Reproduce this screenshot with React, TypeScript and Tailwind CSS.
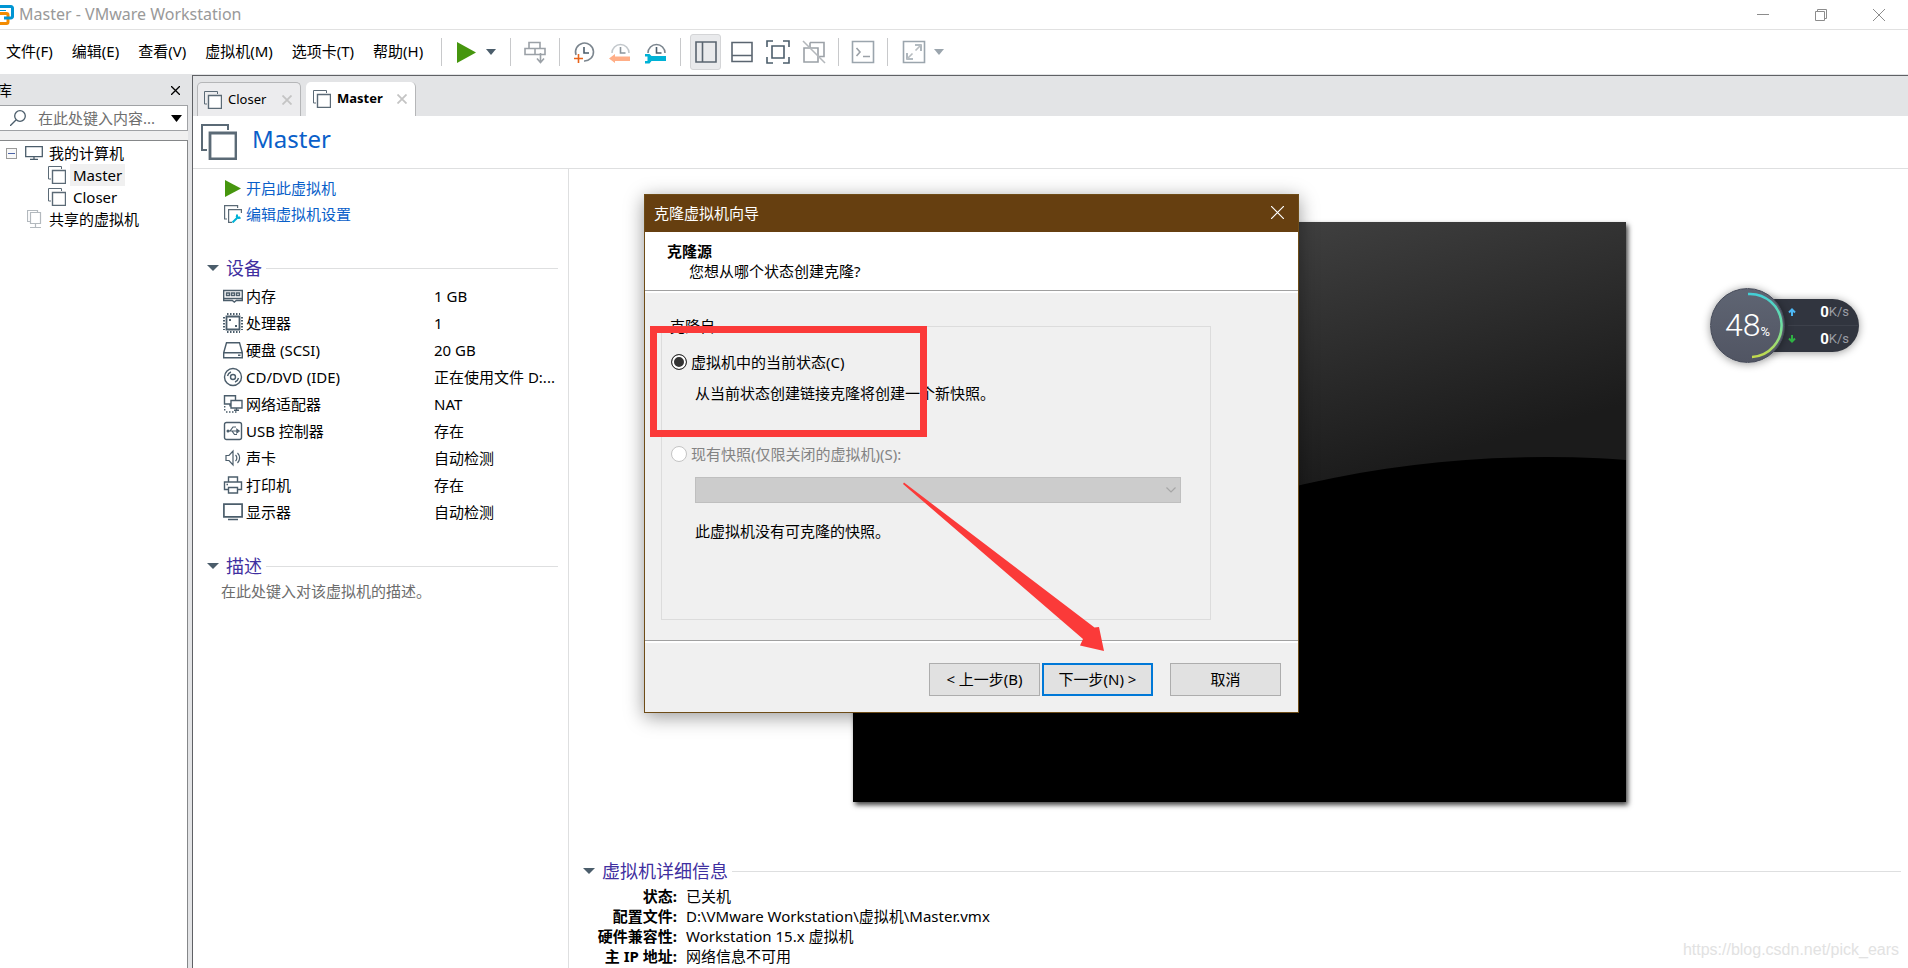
import type { ReactNode } from "react";

const SLATE = "#4b5d6b";

type IconProps = { className?: string };

const VmIcon = ({ className = "w-[18px] h-[18px]" }: IconProps) => (
  <svg viewBox="0 0 18 18" className={className} fill="none" stroke="#5b6a76">
    <path d="M3 13H.5V.5h13V3" />
    <rect x="4.5" y="4.5" width="13" height="13" fill="#fff" />
    <path d="M4.5 4.5h13v13h-13z" strokeWidth="1.4" />
  </svg>
);

const PlayIcon = ({ className }: IconProps) => (
  <svg viewBox="0 0 16 17" preserveAspectRatio="none" className={className}>
    <path d="M0 0L16 8.500L0 17z" fill="#46960e" />
  </svg>
);

const Caret = ({ className = "w-[10px] h-[6px]", color = SLATE }: IconProps & { color?: string }) => (
  <svg viewBox="0 0 12 6" preserveAspectRatio="none" className={className}>
    <path d="M0 0h12L6 6z" fill={color} />
  </svg>
);

const Logo = () => (
  <svg viewBox="0 0 14 20" className="w-[14px] h-5" fill="none" strokeWidth="3">
    <path d="M-3 8.500H6.500a1.500 1.500 0 0 1 1.500 1.500V17a1.500 1.500 0 0 1-1.500 1.500H-3" stroke="#f38b00" />
    <path d="M-3 1.500h14a1.500 1.500 0 0 1 1.500 1.500v8.500a1.500 1.500 0 0 1-1.500 1.500H4" stroke="#0095d3" />
    <path d="M0 5.500h6" stroke="#0095d3" strokeWidth="1" />
  </svg>
);

const Tool = ({ label, children }: { label: string; children: ReactNode }) => (
  <button aria-label={label} className="shrink-0">
    <svg viewBox="0 0 24 24" className="w-6 h-6" fill="none" strokeWidth="1.6">
      {children}
    </svg>
  </button>
);

const Separator = () => <span className="w-px h-7 bg-[#c8c9cb] shrink-0" />;

const menus = ["文件(F)", "编辑(E)", "查看(V)", "虚拟机(M)", "选项卡(T)", "帮助(H)"];

const TitleBar = () => (
  <header className="flex items-center h-[30px] border-b border-[#e1e1e1] shrink-0">
    <Logo />
    <h1 className="ml-[5px] pb-0.5 text-base leading-5 text-[#999] flex-1">Master - VMware Workstation</h1>
    <button aria-label="最小化" className="w-[58px] flex justify-center">
      <svg viewBox="0 0 12 12" className="w-3 h-3" stroke="#8c8c8c">
        <path d="M0 5.500h12" />
      </svg>
    </button>
    <button aria-label="还原" className="w-[58px] flex justify-center">
      <svg viewBox="0 0 12 12" className="w-3 h-3" stroke="#8c8c8c" fill="none">
        <path d="M.5 2.500h9v9h-9zM2.500 2.500v-2h9v9h-2" />
      </svg>
    </button>
    <button aria-label="关闭" className="w-[58px] flex justify-center">
      <svg viewBox="0 0 12 12" className="w-3 h-3" stroke="#8c8c8c">
        <path d="M0 0l12 12M12 0L0 12" />
      </svg>
    </button>
  </header>
);

const Toolbar = () => (
  <div className="flex items-center h-[45px] border-b border-[#e3e4e6] shrink-0">
    <nav className="flex gap-[19px] pl-1.5 pb-[3px] w-[441px] shrink-0 text-[15px] leading-5 text-black">
      {menus.map((menu) => (
        <button key={menu} className="whitespace-nowrap">
          {menu}
        </button>
      ))}
    </nav>
    <div className="flex items-center gap-3">
      <Separator />
      <button aria-label="启动" className="flex items-center gap-[10px] ml-[3px] mr-0.5">
        <PlayIcon className="w-[19px] h-[21px]" />
        <Caret />
      </button>
      <Separator />
      <Tool label="发送 Ctrl+Alt+Del">
        <g stroke="#9ba1a7">
          <path d="M6 8V2.500h11V8M2 8.500h20v6H2zM12 8.500v6" />
          <path d="M17.500 13v9M14 18.500l3.500 4 3.500-4" />
        </g>
      </Tool>
      <Separator />
      <Tool label="拍摄快照">
        <path d="M4 15A9 9 0 1 1 12 21" stroke="#7b858e" />
        <path d="M12 7v6h5" stroke={SLATE} />
        <path d="M2 18.500h9M6.500 14v9" stroke="#e8641b" />
      </Tool>
      <Tool label="恢复快照">
        <path d="M4 13A8.500 8.500 0 1 1 21 13" stroke="#c3c8cc" />
        <path d="M12.500 7v6h5" stroke="#8c959c" />
        <path d="M1 18.500l6-4.500v2.500h15v4.500H7V23z" fill="#ffae87" />
      </Tool>
      <Tool label="管理快照">
        <path d="M4 13A8.500 8.500 0 1 1 21 13" stroke="#7b858e" />
        <path d="M12.500 7v6h5" stroke={SLATE} />
        <path d="M1 14h4.500l2 2H22v5H7.500l-2 2.500H1V21h2.500v-4.500H1z" fill="#00b2d6" />
      </Tool>
      <Separator />
      <button
        aria-label="显示库"
        className="w-[31px] h-9 -mx-[3px] flex items-center justify-center rounded-[3px] border border-[#d4d5d7] bg-[#e9eaec]"
      >
        <svg viewBox="0 0 24 24" className="w-6 h-6 shrink-0" fill="none" stroke="#5a6570" strokeWidth="1.6">
          <path d="M2 2h20v20H2zM8.500 2v20" />
        </svg>
      </button>
      <Tool label="显示缩略图栏">
        <path d="M2 2.500h20v19H2zM2 15.500h20" stroke="#5a6570" />
      </Tool>
      <Tool label="全屏">
        <path d="M1 7V1h6M17 1h6v6M23 17v6h-6M7 23H1v-6M6 6h12v12H6z" stroke={SLATE} />
      </Tool>
      <Tool label="Unity 模式">
        <path d="M8 2.500h14v14h-5M8 2.500V8M2 8h14v14H2zM11 8h5v6" stroke="#9ba1a7" />
        <path d="M1 1l22 22" stroke="#b4b8bc" />
      </Tool>
      <Separator />
      <Tool label="控制台">
        <path d="M1.500 1.500h21v21h-21z" stroke="#9ba5ad" />
        <path d="M5.500 8l3.500 4-3.500 4M12 16.500h7" stroke="#9ba1a7" />
      </Tool>
      <Separator />
      <button aria-label="拉伸" className="flex items-center gap-2 ml-0.5">
        <svg viewBox="0 0 24 24" className="w-6 h-6" fill="none" stroke="#9ba5ad" strokeWidth="1.6">
          <path d="M1.500 1.500h21v21h-21zM13 5h6v6M11 19H5v-6" />
          <path d="M19 5l-5.500 5.500M5 19l5.500-5.500" stroke="#b8bdc1" />
        </svg>
        <Caret color="#9ba5ad" />
      </button>
    </div>
  </div>
);

const Library = () => (
  <aside className="w-[192px] shrink-0 bg-[#e3e4e6] flex flex-col pr-1">
    <div className="flex items-center justify-between h-[30px] text-[15px] leading-5">
      <h2 className="-ml-[3px]">库</h2>
      <button aria-label="关闭库" className="mr-2">
        <svg viewBox="0 0 9 9" className="w-[9px] h-[9px]" stroke="#000" strokeWidth="1.3">
          <path d="M0 0l9 9M9 0L0 9" />
        </svg>
      </button>
    </div>
    <label className="flex items-center h-[26px] bg-white border border-l-0 border-[#a0a2a5] pl-[10px] pr-[5px] gap-3">
      <svg viewBox="0 0 16 16" className="w-4 h-4 shrink-0" fill="none" stroke={SLATE} strokeWidth="1.3">
        <circle cx="10" cy="6" r="5.300" />
        <path d="M6 10l-6 6" />
      </svg>
      <input
        aria-label="搜索"
        placeholder="在此处键入内容..."
        className="min-w-0 flex-1 text-[15px] leading-5 outline-none placeholder:text-[#6e6e6e]"
      />
      <Caret color="#000" className="w-[11px] h-[7px] shrink-0" />
    </label>
    <div className="h-[9px] bg-[#f0f0f0]" />
    <ul className="flex-1 bg-white border-t border-r border-[#858789] pt-px text-[15px] leading-[22px] text-black">
      <li>
        <div className="flex items-center pl-1.5 h-[22px]">
          <button aria-label="折叠" className="mr-2">
            <svg viewBox="0 0 11 11" className="w-[11px] h-[11px]">
              <rect x=".5" y=".5" width="10" height="10" fill="#f8f8f8" stroke="#9a9a9a" />
              <path d="M2 5.500h7" stroke="#4b63a7" />
            </svg>
          </button>
          <svg viewBox="0 0 18 14" className="w-[18px] h-[14px] mr-1.5" fill="none" stroke={SLATE} strokeWidth="1.3">
            <path d="M.7.700h16.600v10H.700zM9 11v2M5 13.400h8" />
          </svg>
          我的计算机
        </div>
        <ul>
          <li className="flex items-center pl-12 h-[22px] gap-1">
            <VmIcon />
            <span className="bg-[#f0f0f0] px-[3px]">Master</span>
          </li>
          <li className="flex items-center pl-12 h-[22px] gap-1">
            <VmIcon />
            <span className="px-[3px]">Closer</span>
          </li>
        </ul>
      </li>
      <li className="flex items-center pl-[27px] h-[22px] gap-[7px]">
        <svg viewBox="0 0 15 18" className="w-[15px] h-[18px]" fill="none" stroke="#b3b9be">
          <path d="M3 11.500H.5V.5h10V3M3.500 2.500h10v11h-10zM8.500 13.500v4M3 17.500h11" strokeWidth="1.2" />
        </svg>
        共享的虚拟机
      </li>
    </ul>
  </aside>
);

const CloseMark = () => (
  <svg viewBox="0 0 10 10" className="w-[10px] h-[10px]" stroke="#c4c4c4" strokeWidth="1.8">
    <path d="M.5.5l9 9M9.500.5l-9 9" />
  </svg>
);

const TabStrip = () => (
  <div role="tablist" className="flex items-end gap-[5px] h-10 pl-1 bg-[#e3e4e6] shrink-0 text-[13px] leading-5 text-black">
    <div className="flex items-center h-[34px] w-[104px] pl-1.5 pr-2 bg-[#ececee] border border-b-0 border-[#b5b6b8] rounded-t-[5px]">
      <VmIcon />
      <button role="tab" aria-selected="false" className="ml-[6px] pb-0.5 flex-1 text-left">
        Closer
      </button>
      <button aria-label="关闭 Closer">
        <CloseMark />
      </button>
    </div>
    <div className="flex items-center h-[34px] w-[110px] pl-[7px] pr-2 bg-white border-r border-[#b5b6b8] rounded-t-[5px]">
      <VmIcon />
      <button role="tab" aria-selected="true" className="ml-[6px] pb-0.5 flex-1 text-left font-bold">
        Master
      </button>
      <button aria-label="关闭 Master">
        <CloseMark />
      </button>
    </div>
  </div>
);

const SectionTitle = ({ children }: { children: string }) => (
  <div className="flex items-center h-6">
    <button className="flex items-center gap-[7px] text-[18px] leading-6 text-[#3f2fa0]">
      <Caret className="w-3 h-[6px]" />
      {children}
    </button>
    <span className="flex-1 h-px bg-[#dedfe0] ml-1" />
  </div>
);

const devices: { name: string; value: string; icon: ReactNode }[] = [
  {
    name: "内存",
    value: "1 GB",
    icon: (
      <>
        <path d="M.7 4.500h18.600v10h-6l-2 1.500-2-1.500H.700zM.7 12.500h18.600" />
        <path d="M3.500 7h3v2.500h-3zM8.500 7h3v2.500h-3zM13.500 7h3v2.500h-3z" />
      </>
    ),
  },
  {
    name: "处理器",
    value: "1",
    icon: (
      <>
        <path d="M3.500 3.500h13v13h-13z" strokeWidth="1.800" />
        <path d="M4 1h13M4 19h13" strokeDasharray="1.500 1.500" strokeWidth="2" />
        <path d="M1 4v13M19 4v13" strokeDasharray="1.500 1.500" strokeWidth="2" />
        <path d="M6 7h2M12 13h2" strokeWidth="2" />
      </>
    ),
  },
  {
    name: "硬盘 (SCSI)",
    value: "20 GB",
    icon: <path d="M3.500 2.700h13l2.800 10v5H.7v-5zM.7 12.700h18.600M15 15.200h2.500" />,
  },
  {
    name: "CD/DVD (IDE)",
    value: "正在使用文件 D:...",
    icon: (
      <>
        <circle cx="10" cy="10" r="8.500" />
        <circle cx="10" cy="10" r="2.500" />
        <path d="M4.500 9A5.500 5.500 0 0 1 8 5M15.500 11a5.500 5.500 0 0 1-3.500 4" />
      </>
    ),
  },
  {
    name: "网络适配器",
    value: "NAT",
    icon: (
      <>
        <path d="M8 10H1.500V1.700h11V6M8 6.500h11v7.500H8zM13.500 14v2M11 16.300h5M7 10.500v2" />
        <path d="M1.700 12v6M3 18h11" strokeDasharray="1.500 1.500" />
      </>
    ),
  },
  {
    name: "USB 控制器",
    value: "存在",
    icon: (
      <>
        <rect x="1.500" y="1.500" width="17" height="17" rx="2" />
        <path d="M4 10h11M7 10l3-4h3M9 10l2.500 3.500H14" strokeWidth="1.200" />
        <circle cx="5" cy="10" r=".8" />
        <path d="M14 8.500l2 1.500-2 1.500z" />
      </>
    ),
  },
  {
    name: "声卡",
    value: "自动检测",
    icon: (
      <path d="M3 7.500h3L10 3v14l-4-4.500H3zM12.500 7a4 4 0 0 1 0 6M14.500 5a7 7 0 0 1 0 10" strokeWidth="1.200" />
    ),
  },
  {
    name: "打印机",
    value: "存在",
    icon: <path d="M5.500 7V2h9v5M5 14.500H1.500V7h17v7.500H15M5.500 12.500h9V18h-9zM3.500 9.500H5" />,
  },
  {
    name: "显示器",
    value: "自动检测",
    icon: <path d="M.9 2.200h18.200v12.600H.9zM5 17.500h10" strokeWidth="1.700" />,
  },
];

const Summary = () => (
  <section className="w-[376px] shrink-0 border-r border-[#dedfe0] pl-[14px] pr-[10px] pt-1.5 text-[15px] text-black">
    <ul className="pl-[18px] text-[#0a5fc9] leading-[26px]">
      <li>
        <a href="#power-on" className="flex items-center gap-[5px]">
          <PlayIcon className="w-4 h-[17px]" />
          开启此虚拟机
        </a>
      </li>
      <li>
        <a href="#settings" className="flex items-center gap-1">
          <svg viewBox="0 0 18 18" className="w-[18px] h-[18px] -ml-px" fill="none" stroke="#5b6a76" strokeWidth="1.200">
            <path d="M3 14H.6V.6h13V3M8 17.400H4.600V4.600h12.800V8" />
            <path d="M8.500 17.500l5-5M12.500 11a2.500 2.500 0 0 0 4 1.500M13 9.500v3h3" stroke="#00b2d6" strokeWidth="2" />
          </svg>
          编辑虚拟机设置
        </a>
      </li>
    </ul>
    <div className="mt-[29px]">
      <SectionTitle>设备</SectionTitle>
      <table className="mt-0.5 ml-4 leading-5">
        <tbody>
          {devices.map(({ name, value, icon }) => (
            <tr key={name} className="h-[27px]">
              <th scope="row" className="w-[211px] p-0 font-normal text-left">
                <span className="flex items-center gap-[3px]">
                  <svg viewBox="0 0 20 20" className="w-5 h-5" fill="none" stroke={SLATE} strokeWidth="1.400">
                    {icon}
                  </svg>
                  {name}
                </span>
              </th>
              <td className="p-0 whitespace-nowrap">{value}</td>
            </tr>
          ))}
        </tbody>
      </table>
    </div>
    <div className="mt-[29px]">
      <SectionTitle>描述</SectionTitle>
      <textarea
        aria-label="描述"
        rows={2}
        placeholder="在此处键入对该虚拟机的描述。"
        className="block w-full mt-0.5 pl-[14px] leading-[22px] resize-none outline-none placeholder:text-[#6d6d6d]"
      />
    </div>
  </section>
);

const ScreenPreview = () => (
  <svg viewBox="0 0 773 580" className="w-[773px] h-[580px] shadow-[2px_3px_5px_rgba(0,0,0,0.75)]">
    <defs>
      <linearGradient id="glass" gradientUnits="userSpaceOnUse" x1="420" y1="-20" x2="500" y2="260">
        <stop offset="0" stopColor="#434343" />
        <stop offset="1" stopColor="#1b1b1b" />
      </linearGradient>
    </defs>
    <path d="M0 0h773v580H0z" fill="url(#glass)" />
    <circle cx="693" cy="1325" r="1090" />
    <path d="M0 400h773v180H0z" />
  </svg>
);

const details = [
  ["状态:", "已关机"],
  ["配置文件:", "D:\\VMware Workstation\\虚拟机\\Master.vmx"],
  ["硬件兼容性:", "Workstation 15.x 虚拟机"],
  ["主 IP 地址:", "网络信息不可用"],
];

const MachineView = () => (
  <section className="flex-1 min-w-0 flex flex-col">
    <div className="flex-1 flex items-center justify-center pb-1 pl-0.5">
      <ScreenPreview />
    </div>
    <div className="pl-[14px] pr-[7px] pb-0.5 text-black">
      <SectionTitle>虚拟机详细信息</SectionTitle>
      <dl className="mt-[3px] text-[15px] leading-5">
        {details.map(([label, value]) => (
          <div key={label} className="flex gap-[9px]">
            <dt className="w-[94px] text-right font-bold whitespace-nowrap">{label}</dt>
            <dd>{value}</dd>
          </div>
        ))}
      </dl>
    </div>
  </section>
);

const CloneWizard = () => (
  <div
    role="dialog"
    aria-labelledby="wizard-title"
    className="absolute left-[644px] top-[194px] w-[655px] border border-[#6e4c17] bg-[#f0f0f0] text-[15px] leading-5 text-black shadow-[0_4px_18px_rgba(0,0,0,0.4)]"
  >
    <div className="flex items-center justify-between h-[37px] pl-[9px] pr-[14px] pb-0.5 bg-[#663f10] text-white">
      <h2 id="wizard-title">克隆虚拟机向导</h2>
      <button aria-label="关闭">
        <svg viewBox="0 0 13 13" className="w-[13px] h-[13px]" stroke="#fff" strokeWidth="1.200">
          <path d="M0 0l13 13M13 0L0 13" />
        </svg>
      </button>
    </div>
    <div className="bg-white py-[9px] pl-[22px]">
      <h3 className="font-bold">克隆源</h3>
      <p className="pl-[22px]">您想从哪个状态创建克隆?</p>
    </div>
    <div className="h-[3px] border-t border-[#a0a0a0] bg-white" />
    <div className="pt-[23px] pb-5 pl-4">
      <fieldset className="w-[550px] h-[304px] border border-[#dcdcdc] pl-2">
        <legend>克隆自</legend>
        <label className="flex items-center gap-1 mt-4">
          <input
            type="radio"
            name="source"
            defaultChecked
            className="appearance-none w-4 h-4 ml-px rounded-full border border-[#333] bg-[#333] shadow-[inset_0_0_0_2px_#fff]"
          />
          虚拟机中的当前状态(C)
        </label>
        <p className="mt-[11px] pl-[25px]">从当前状态创建链接克隆将创建一个新快照。</p>
        <label className="flex items-center gap-1 mt-[41px] text-[#838383]">
          <input
            type="radio"
            name="source"
            disabled
            className="appearance-none w-4 h-4 ml-px rounded-full border border-[#c4c4c4] bg-white"
          />
          现有快照(仅限关闭的虚拟机)(S):
        </label>
        <div className="grid items-center mt-[13px] ml-[25px] w-[486px]">
          <select
            aria-label="现有快照"
            disabled
            className="appearance-none col-start-1 row-start-1 h-[26px] border border-[#bfbfbf] bg-[#ccc]"
          />
          <svg
            viewBox="0 0 10 6"
            className="col-start-1 row-start-1 justify-self-end mr-[5px] w-[10px] h-[6px] pointer-events-none"
            fill="none"
            stroke="#a6a6a6"
            strokeWidth="1.200"
          >
            <path d="M.5.5L5 5l4.500-4.500" />
          </svg>
        </div>
        <p className="mt-[18px] pl-[25px]">此虚拟机没有可克隆的快照。</p>
      </fieldset>
    </div>
    <div className="flex justify-end pt-[22px] pb-4 pr-[17px] border-t border-[#a0a0a0] shadow-[inset_0_2px_0_#fff]">
      <button className="w-[111px] h-[33px] pb-0.5 border border-[#adadad] bg-[#e1e1e1]">&lt; 上一步(B)</button>
      <button className="w-[111px] h-[33px] pb-0.5 ml-0.5 border-2 border-[#0078d7] bg-[#e1e1e1]">下一步(N) &gt;</button>
      <button className="w-[111px] h-[33px] pb-0.5 ml-[17px] border border-[#adadad] bg-[#e1e1e1]">取消</button>
    </div>
    {/* highlight box and pointer drawn on top of the wizard */}
    <svg viewBox="0 0 653 517" className="absolute left-0 top-0 w-full h-full pointer-events-none">
      <rect x="8.500" y="134.500" width="270" height="104" fill="none" stroke="#fb3a39" strokeWidth="7" />
      <path d="M258 289l1-1.500L449.500 432.500 454 432 459 456l-24-5.500 3-6.500z" fill="#fb3a39" />
    </svg>
  </div>
);

const SpeedRow = ({ up }: { up?: boolean }) => (
  <div className="flex items-center flex-1 pr-[10px]">
    <svg viewBox="0 0 8 8" className="w-2 h-2" fill="none" stroke={up ? "#4db8f5" : "#2fb344"} strokeWidth="2">
      <path d={up ? "M4 8V1M1 4.500l3-3 3 3" : "M4 0v7M1 3.500l3 3 3-3"} />
    </svg>
    <span className="flex-1 text-right text-[15px] leading-4 font-bold text-white">0</span>
    <span className="text-[13px] leading-4 text-[#9a9da5]">K/s</span>
  </div>
);

const NetworkWidget = () => (
  <div className="absolute right-[49px] top-[288px] flex items-center font-[Roboto,sans-serif]">
    <div className="grid place-items-center w-[75px] h-[75px] rounded-full bg-linear-to-b from-[#5f6573] to-[#515563] border border-[#444957] shadow-[0_1px_8px_rgba(0,0,0,0.4)] z-10">
      <svg viewBox="0 0 73 73" className="col-start-1 row-start-1 w-[73px] h-[73px]" fill="none">
        <defs>
          <linearGradient id="load" x1="0" y1="0" x2="0" y2="1">
            <stop offset="0" stopColor="#43cfd6" />
            <stop offset=".5" stopColor="#6fdf9f" />
            <stop offset="1" stopColor="#c2d94c" />
          </linearGradient>
        </defs>
        <path d="M37 5a31.500 31.500 0 0 1 4 63" stroke="url(#load)" strokeWidth="2.500" />
      </svg>
      <p className="col-start-1 row-start-1 flex items-baseline pb-0.5 text-white">
        <span className="text-[32px] leading-9 font-light">48</span>
        <span className="text-[13px]">%</span>
      </p>
    </div>
    <div className="flex flex-col w-[96px] h-[53px] -ml-[22px] pl-[25px] rounded-r-full bg-[#31353f] shadow-[0_1px_8px_rgba(0,0,0,0.4)] divide-y divide-[#3d414b]">
      <SpeedRow up />
      <SpeedRow />
    </div>
  </div>
);

export default function App() {
  return (
    <div className="relative h-screen flex flex-col overflow-hidden bg-white font-['Noto_Sans','Noto_Sans_CJK_SC',sans-serif]">
      <TitleBar />
      <Toolbar />
      <div className="flex flex-1 min-h-0">
        <Library />
        <main className="flex-1 min-w-0 flex flex-col border-t border-l border-[#5f6165]">
          <TabStrip />
          <div className="flex items-start gap-[15px] h-[53px] pl-2 pt-2 border-b border-[#dedfe0] shrink-0">
            <VmIcon className="w-9 h-9" />
            <h2 className="text-[24px] leading-[30px] text-[#0a5fc9]">Master</h2>
          </div>
          <div className="flex flex-1 min-h-0">
            <Summary />
            <MachineView />
          </div>
        </main>
      </div>
      <CloneWizard />
      <NetworkWidget />
      <p className="absolute right-[9px] bottom-[6px] text-[16px] leading-6 text-[#e2e2e2] font-['Liberation_Sans',sans-serif]">
        https://blog.csdn.net/pick_ears
      </p>
    </div>
  );
}
